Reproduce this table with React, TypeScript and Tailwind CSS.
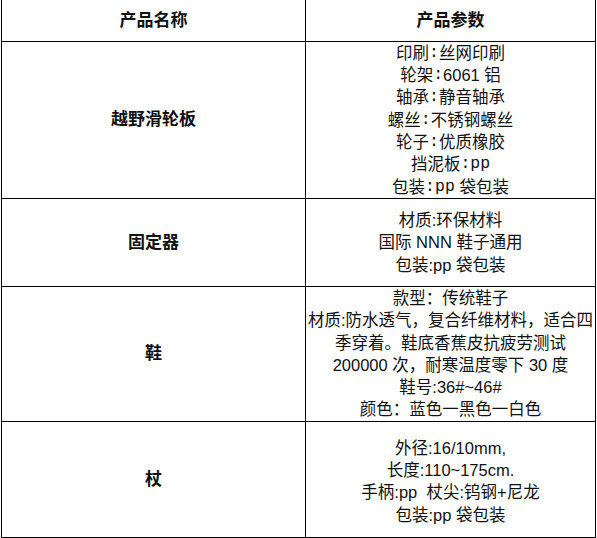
const cjk = "font-['Liberation_Sans','Noto_Sans_CJK_SC',sans-serif]";

function Mono({ children }: { children: React.ReactNode }) {
  return <span className="font-['Liberation_Mono','Noto_Sans_CJK_SC',monospace]">{children}</span>;
}

const rows: { name: string; height: string; pad?: string; lines: React.ReactNode[] }[] = [
  {
    name: "越野滑轮板",
    height: "h-[157px]",
    lines: [
      <>印刷<Mono>:</Mono>丝网印刷</>,
      <>轮架<Mono>:</Mono>6061 铝</>,
      <>轴承<Mono>:</Mono>静音轴承</>,
      <>螺丝<Mono>:</Mono>不锈钢螺丝</>,
      <>轮子<Mono>:</Mono>优质橡胶</>,
      <>挡泥板<Mono>:pp</Mono></>,
      <>包装<Mono>:pp</Mono> 袋包装</>
    ]
  },
  {
    name: "固定器",
    height: "h-[88px]",
    lines: ["材质:环保材料", "国际 NNN 鞋子通用", "包装:pp 袋包装"]
  },
  {
    name: "鞋",
    height: "h-[135px]",
    lines: [
      "款型：传统鞋子",
      "材质:防水透气，复合纤维材料，适合四",
      "季穿着。鞋底香蕉皮抗疲劳测试",
      "200000 次，耐寒温度零下 30 度",
      "鞋号:36#~46#",
      "颜色：蓝色一黑色一白色"
    ]
  },
  {
    name: "杖",
    height: "h-[116px]",
    pad: "pt-1",
    lines: ["外径:16/10mm,", "长度:110~175cm.", "手柄:pp  杖尖:钨钢+尼龙", "包装:pp 袋包装"]
  }
];

export default function App() {
  return (
    <div className={`min-h-[538px] bg-white text-[#111] ${cjk}`}>
      <div className="ml-px w-[595px] border-x border-black">
        <div className="grid h-[42px] grid-cols-[304px_1fr] border-b border-black">
          <div className="flex items-center justify-center border-r border-black text-[17px] font-bold">产品名称</div>
          <div className="flex items-center justify-center text-[17px] font-bold">产品参数</div>
        </div>
        {rows.map((row) => (
          <div className={`grid grid-cols-[304px_1fr] border-b border-black ${row.height}`} key={row.name}>
            <div className="flex items-center justify-center border-r border-black text-[17px] font-bold">{row.name}</div>
            <div className={`flex flex-col items-center justify-center text-[16.5px] ${row.pad ?? ""}`}>
              {row.lines.map((line, index) => (
                <div className="flex h-[22.3px] shrink-0 items-center whitespace-pre leading-none" key={index}>
                  {line}
                </div>
              ))}
            </div>
          </div>
        ))}
      </div>
    </div>
  );
}
